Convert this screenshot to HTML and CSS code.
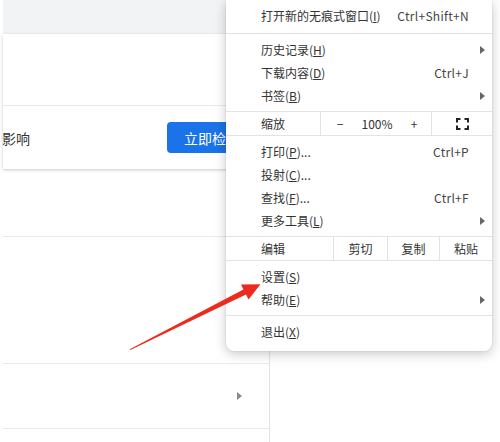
FILE: index.html
```html
<!DOCTYPE html>
<html lang="zh-CN">
<head>
<meta charset="utf-8">
<title>设置</title>
<link rel="stylesheet" href="styles.css">
</head>
<body>
<div class="page">
  <main class="col">
    <div class="band"></div>
    <section class="card">
      <div class="card-top"></div>
      <div class="card-row">
        <span class="desc">影响</span>
        <button class="btn">立即检查</button>
      </div>
    </section>
    <div class="gap"></div>
    <div class="row tall"></div>
    <div class="row mid"><span class="chev"></span></div>
    <div class="row last"></div>
  </main>
</div>

<div class="menu">
  <div class="sec first">
    <div class="item"><span class="lbl">打开新的无痕式窗口(<u>I</u>)</span><span class="key">Ctrl+Shift+N</span></div>
  </div>
  <div class="sep"></div>
  <div class="sec">
    <div class="item sub"><span class="lbl">历史记录(<u>H</u>)</span></div>
    <div class="item"><span class="lbl">下载内容(<u>D</u>)</span><span class="key">Ctrl+J</span></div>
    <div class="item sub"><span class="lbl">书签(<u>B</u>)</span></div>
  </div>
  <div class="sep"></div>
  <div class="zoom">
    <span class="zlabel">缩放</span>
    <div class="zctl"><span>−</span><span>100%</span><span>+</span></div>
    <div class="zfull">
      <svg width="13" height="12" viewBox="0 0 13 12" aria-hidden="true">
        <path d="M1 4.5V1h3.5M8.5 1H12v3.5M12 7.5V11H8.5M4.5 11H1V7.5" fill="none" stroke="#222" stroke-width="2"/>
      </svg>
    </div>
  </div>
  <div class="sep"></div>
  <div class="sec">
    <div class="item"><span class="lbl">打印(<u>P</u>)...</span><span class="key">Ctrl+P</span></div>
    <div class="item"><span class="lbl">投射(<u>C</u>)...</span></div>
    <div class="item"><span class="lbl">查找(<u>F</u>)...</span><span class="key">Ctrl+F</span></div>
    <div class="item sub"><span class="lbl">更多工具(<u>L</u>)</span></div>
  </div>
  <div class="sep"></div>
  <div class="edit">
    <span class="elabel">编辑</span>
    <span class="ecell">剪切</span>
    <span class="ecell">复制</span>
    <span class="ecell">粘贴</span>
  </div>
  <div class="sep"></div>
  <div class="sec">
    <div class="item"><span class="lbl">设置(<u>S</u>)</span></div>
    <div class="item sub"><span class="lbl">帮助(<u>E</u>)</span></div>
  </div>
  <div class="sep"></div>
  <div class="sec lastsec">
    <div class="item"><span class="lbl">退出(<u>X</u>)</span></div>
  </div>
</div>

<svg class="pointer" width="500" height="442" viewBox="0 0 500 442" aria-hidden="true">
  <polygon points="129.7,349.2 243.4,289.6 241.0,284.6 260.5,284.3 248.6,299.6 246.0,294.4 130.3,350.0" fill="#ee2a1f"/>
</svg>
</body>
</html>
```

FILE: styles.css
```css
* { box-sizing: border-box; }

html, body {
  margin: 0;
  padding: 0;
  background: #fff;
}

body {
  width: 500px;
  height: 442px;
  overflow: hidden;
  position: relative;
  font-family: "Noto Sans CJK SC", "Noto Sans", sans-serif;
  color: #333;
}

.page {
  display: flex;
  padding-left: 3px;
  height: 442px;
}

.col {
  width: 267px;
  height: 442px;
  border-right: 1px solid #e3e3e3;
  display: flex;
  flex-direction: column;
}

.band {
  height: 34px;
  background: #f1f3f4;
}

.card {
  background: #fff;
  box-shadow: 0 1px 3px rgba(60, 64, 67, 0.28);
  position: relative;
}

.card-top {
  height: 72px;
  border-bottom: 1px solid #e8eaed;
}

.card-row {
  height: 63px;
  display: flex;
  align-items: center;
}

.desc {
  font-size: 14px;
  color: #333;
  margin-left: -1px;
}

.btn {
  margin-left: auto;
  margin-right: 12px;
  height: 31px;
  padding: 0 17px;
  border: none;
  border-radius: 4px;
  background: #1a73e8;
  color: #fff;
  font-family: inherit;
  font-size: 14px;
}

.gap {
  height: 67px;
}

.row {
  border-top: 1px solid #ebebeb;
}

.row.tall { height: 127px; }

.row.mid {
  height: 65px;
  display: flex;
  align-items: center;
  justify-content: flex-end;
  padding-right: 27px;
}

.row.last { flex: 1; }

.chev {
  width: 0;
  height: 0;
  border-left: 5px solid #8a8a8a;
  border-top: 4px solid transparent;
  border-bottom: 4px solid transparent;
}

/* Context menu overlay */
.menu {
  position: absolute;
  left: 226px;
  top: 0;
  width: 266px;
  background: #fff;
  border-radius: 0 0 8px 8px;
  box-shadow: 0 3px 12px rgba(0, 0, 0, 0.22), 0 0 2px rgba(0, 0, 0, 0.12);
  font-size: 12px;
  color: #333;
}

.sec { padding: 4px 0; }
.sec.first { padding: 4px 0 6px; }
.sec.lastsec { padding: 4px 0 8px; }

.item {
  position: relative;
  display: flex;
  align-items: center;
  height: 23px;
  padding: 0 23px 0 35px;
  white-space: nowrap;
}

.lbl { flex: 1; }

.key {
  color: #444;
  letter-spacing: 0.3px;
}

.item.sub::after {
  content: "";
  position: absolute;
  right: 7px;
  top: 8px;
  border-left: 5px solid #666;
  border-top: 4px solid transparent;
  border-bottom: 4px solid transparent;
}

.sep {
  height: 1px;
  background: #e3e3e3;
}

.zoom {
  display: grid;
  grid-template-columns: 94px 112px 60px;
  height: 23px;
  align-items: stretch;
}

.zlabel {
  display: flex;
  align-items: center;
  padding-left: 35px;
}

.zctl {
  display: grid;
  grid-template-columns: 38px 36px 38px;
  border-left: 1px solid #e3e3e3;
  border-right: 1px solid #e3e3e3;
}

.zctl span {
  display: flex;
  align-items: center;
  justify-content: center;
}

.zfull {
  display: flex;
  align-items: center;
  justify-content: center;
}

.edit {
  display: grid;
  grid-template-columns: 107px 54px 52px 53px;
  height: 23px;
}

.elabel {
  display: flex;
  align-items: center;
  padding-left: 35px;
}

.ecell {
  display: flex;
  align-items: center;
  justify-content: center;
  border-left: 1px solid #e3e3e3;
}

.pointer {
  position: absolute;
  left: 0;
  top: 0;
  pointer-events: none;
}
```
